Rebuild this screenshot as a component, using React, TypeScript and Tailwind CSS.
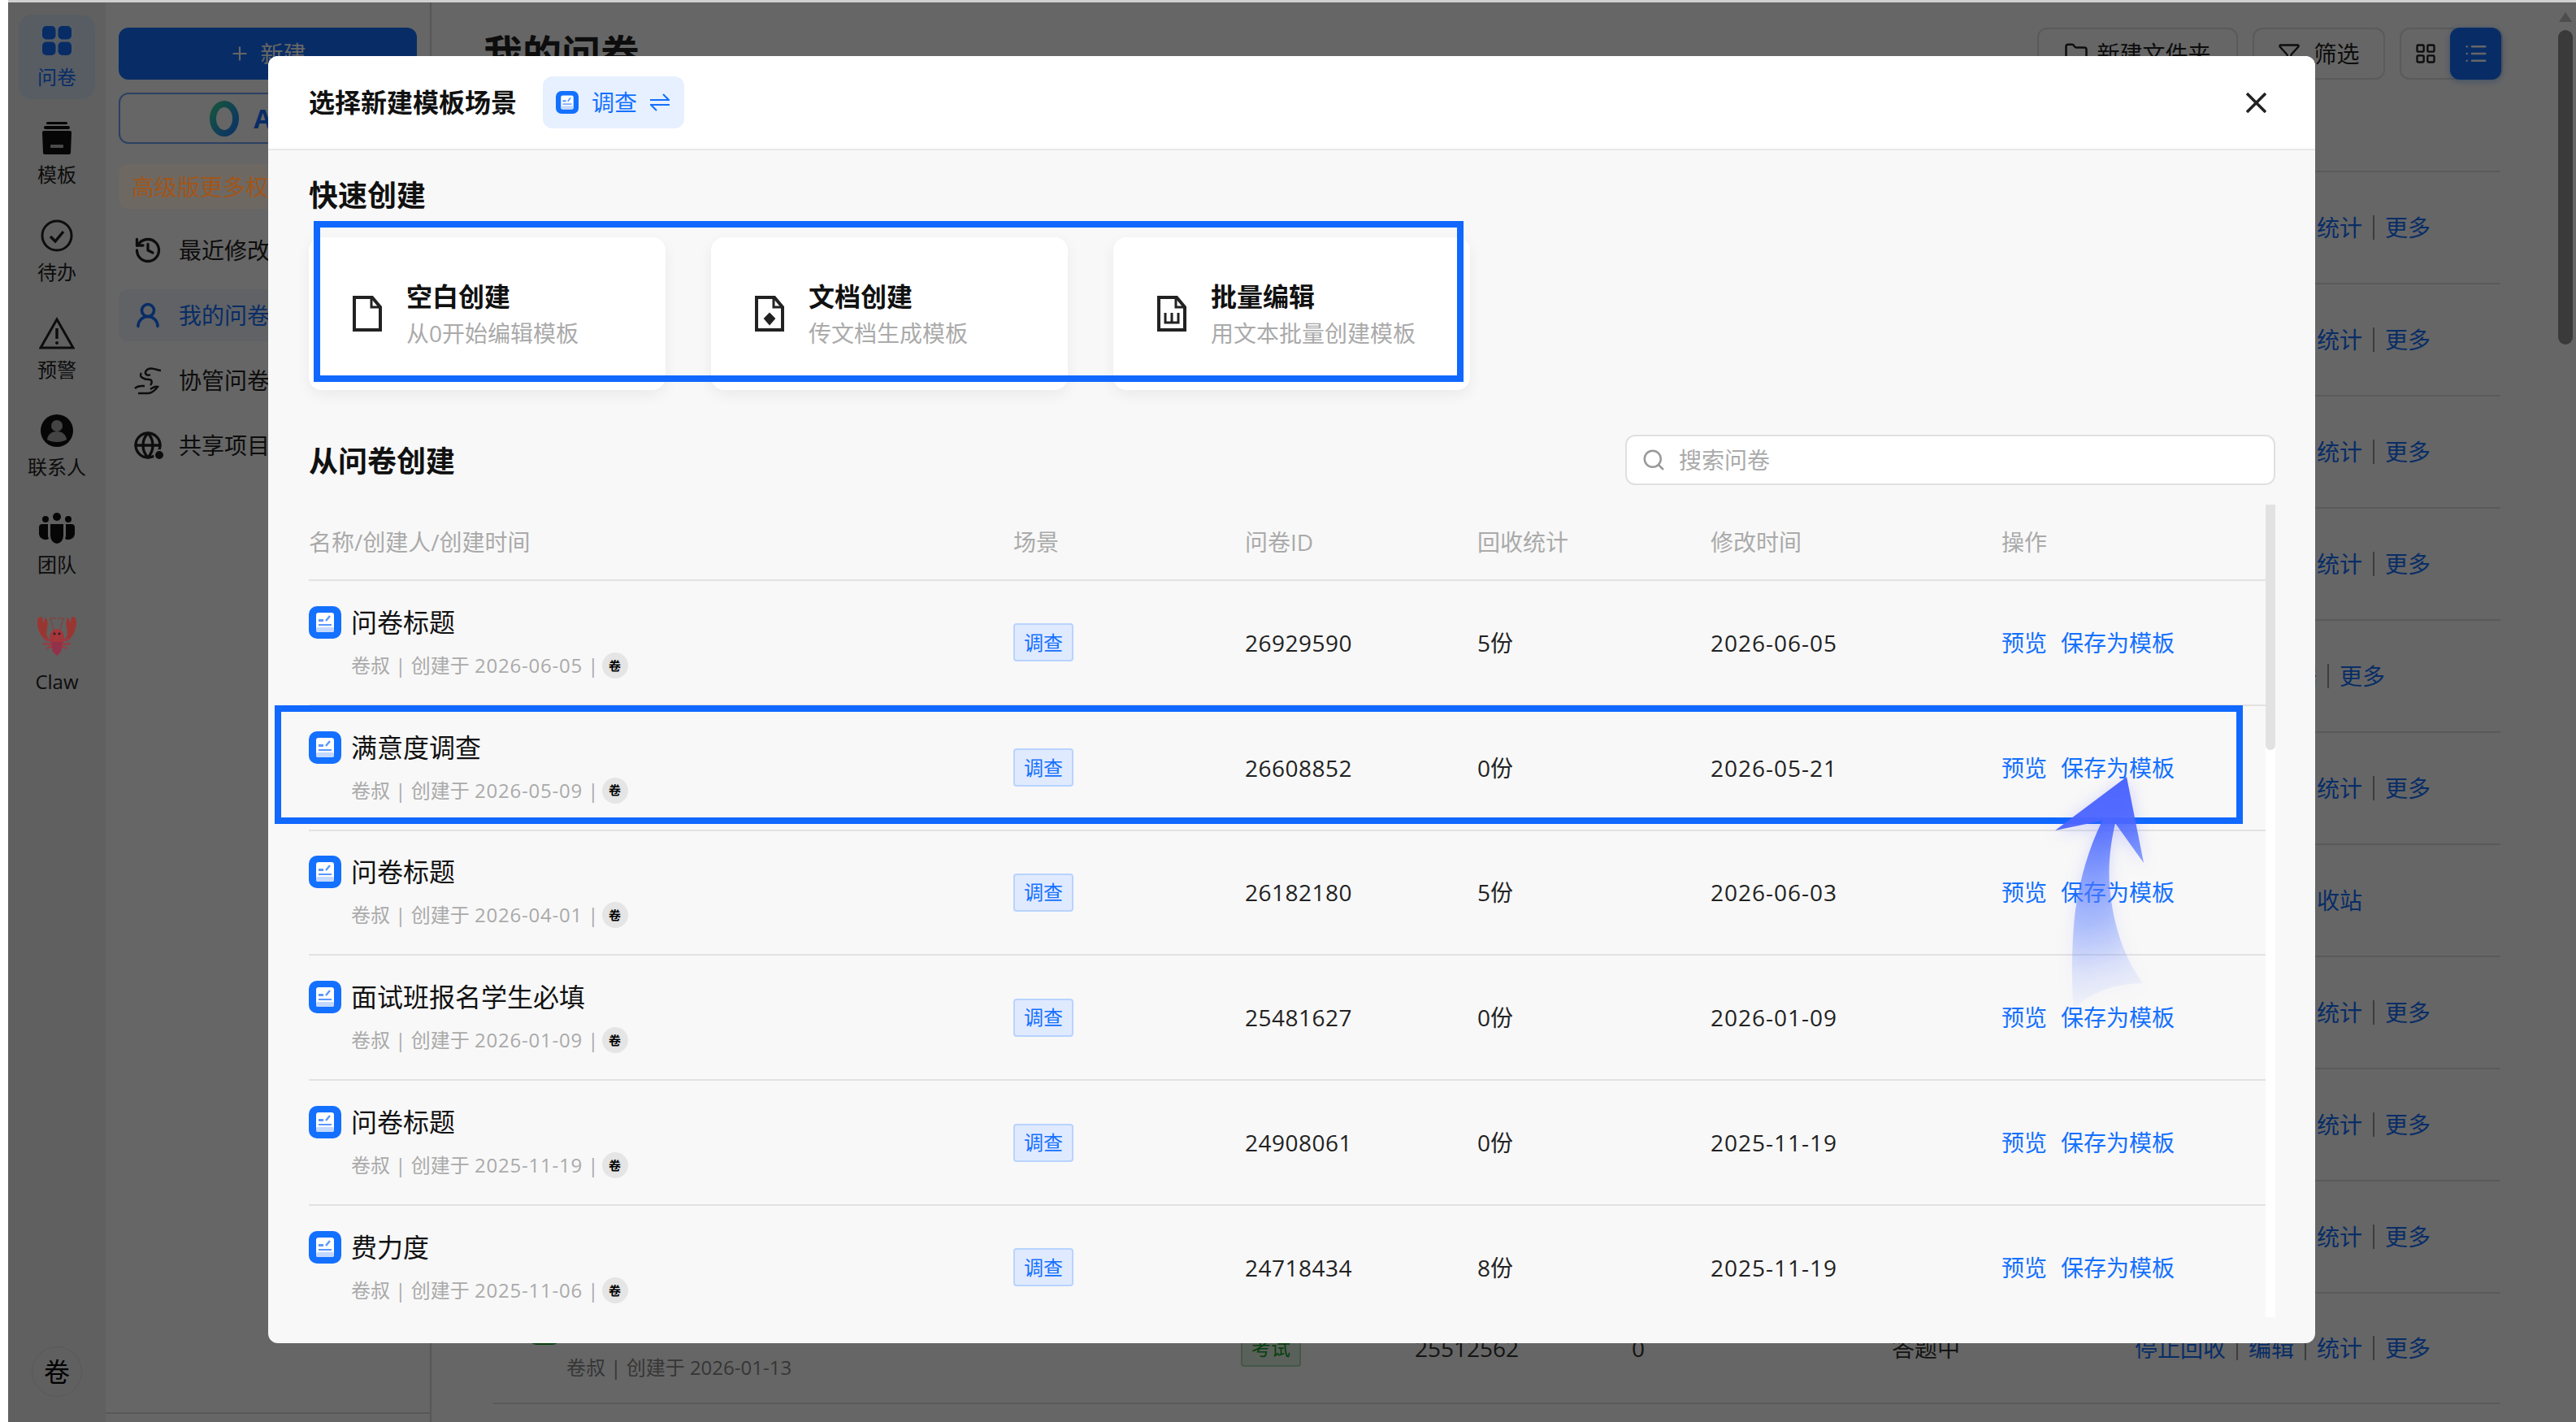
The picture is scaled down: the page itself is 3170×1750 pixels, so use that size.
import { Filter, Folder, Globe, History, LayoutGrid, List, Plus, Search, UserRound } from "lucide-react";

// 弹窗表格数据
const surveys = [
  { title: "问卷标题", created: "2026-06-05", id: "26929590", count: "5份", updated: "2026-06-05" },
  { title: "满意度调查", created: "2026-05-09", id: "26608852", count: "0份", updated: "2026-05-21" },
  { title: "问卷标题", created: "2026-04-01", id: "26182180", count: "5份", updated: "2026-06-03" },
  { title: "面试班报名学生必填", created: "2026-01-09", id: "25481627", count: "0份", updated: "2026-01-09" },
  { title: "问卷标题", created: "2025-11-19", id: "24908061", count: "0份", updated: "2025-11-19" },
  { title: "费力度", created: "2025-11-06", id: "24718434", count: "8份", updated: "2025-11-19" },
];

// 背景列表的操作列
const full = ["停止回收", "编辑", "统计", "更多"];
const pageRows = [full, full, full, full, ["查看全部回收数据", "更多"], full, ["停止回收", "移入回收站"], full, full, full, full];

function SurveyIcon({ size }: { size: number }) {
  return (
    <svg width={size} height={size} viewBox="0 0 40 40" className="shrink-0">
      <rect width="40" height="40" rx="10" fill="#1470ff" />
      <rect x="9" y="8" width="22" height="24" rx="3" fill="#ffffff" />
      <rect x="9" y="26" width="22" height="6" rx="2" fill="#c4d9ff" />
      <rect x="12" y="16" width="6" height="3" fill="#5a97ff" />
      <path d="M21 18l5-6" stroke="#5a97ff" strokeWidth="2.4" />
      <rect x="12" y="22" width="16" height="2" fill="#5a97ff" />
    </svg>
  );
}

function DocIcon({ kind }: { kind: "blank" | "doc" | "text" }) {
  return (
    <svg width="36" height="44" viewBox="0 0 36 44" fill="none" stroke="#222222" strokeWidth="4" className="shrink-0">
      <path d="M2 2h22l10 12v28H2z" />
      <path d="M23 2v12h11" strokeWidth="3" />
      {kind === "doc" && <path d="M18 22l6 6-6 7-6-7z" fill="#222222" strokeWidth="2" />}
      {kind === "text" && <path d="M10 21v12h16V21M18 21v12" strokeWidth="3" />}
    </svg>
  );
}

function Card({ title, desc, kind }: { title: string; desc: string; kind: "blank" | "doc" | "text" }) {
  return (
    <div className="flex h-[188px] w-[439px] items-center gap-[30px] rounded-[16px] bg-white pl-[54px] shadow-[0_6px_18px_rgba(0,0,0,0.06)]">
      <DocIcon kind={kind} />
      <div>
        <div className="text-[32px] leading-[44px] font-semibold text-[#111111]">{title}</div>
        <div className="mt-[3px] text-[28px] leading-[40px] text-[#aaaaaa]">{desc}</div>
      </div>
    </div>
  );
}

function RailItem({ label, active, children }: { label: string; active?: boolean; children: React.ReactNode }) {
  return (
    <div className={`flex h-[104px] w-[94px] flex-col items-center rounded-[16px] pt-[12px] ${active ? "bg-[#dce8fb]" : ""}`}>
      <div className="flex h-[40px] items-center justify-center">{children}</div>
      <div className={`mt-[9px] text-[24px] leading-[32px] whitespace-nowrap ${active ? "text-[#1470ff]" : "text-[#222222]"}`}>{label}</div>
    </div>
  );
}

function Rail() {
  return (
    <div className="flex h-full w-[120px] shrink-0 flex-col items-center gap-[16px] bg-[#f0f0f0] pt-[15px]">
      <RailItem label="问卷" active>
        <svg width="36" height="36" viewBox="0 0 36 36" fill="#1470ff">
          <rect width="16.5" height="16.5" rx="5" />
          <rect x="19.5" width="16.5" height="16.5" rx="5" />
          <rect y="19.5" width="16.5" height="16.5" rx="5" />
          <rect x="19.5" y="19.5" width="16.5" height="16.5" rx="5" />
        </svg>
      </RailItem>
      <RailItem label="模板">
        <svg width="40" height="40" viewBox="0 0 40 40" fill="#111111">
          <rect x="7" y="0" width="26" height="3" rx="1.5" />
          <rect x="4" y="5" width="32" height="4" rx="2" />
          <path d="M2 13a2 2 0 012-2h32a2 2 0 012 2l-1 25a2 2 0 01-2 2H5a2 2 0 01-2-2z" />
          <rect x="12" y="28" width="16" height="4" rx="1" fill="#bbbbbb" />
        </svg>
      </RailItem>
      <RailItem label="待办">
        <svg width="40" height="40" viewBox="0 0 40 40" fill="none" stroke="#222222">
          <circle cx="20" cy="20" r="18" strokeWidth="3" />
          <path d="M12 21l6 6 10-12" strokeWidth="3.5" />
        </svg>
      </RailItem>
      <RailItem label="预警">
        <svg width="44" height="40" viewBox="0 0 44 40" fill="none" stroke="#222222">
          <path d="M22 3L2 38h40z" strokeWidth="3" />
          <path d="M22 14v13" strokeWidth="3.5" />
          <circle cx="22" cy="32" r="2" fill="#222222" stroke="none" />
        </svg>
      </RailItem>
      <RailItem label="联系人">
        <svg width="40" height="40" viewBox="0 0 40 40">
          <circle cx="20" cy="20" r="20" fill="#111111" />
          <circle cx="20" cy="14" r="7" fill="#aaaaaa" />
          <path d="M8 31c1-7 6-10 12-10s11 3 12 10c-6 4-18 4-24 0z" fill="#aaaaaa" />
        </svg>
      </RailItem>
      <RailItem label="团队">
        <svg width="44" height="38" viewBox="0 0 44 38" fill="#111111">
          <circle cx="22" cy="5" r="5" />
          <circle cx="8" cy="8" r="4" />
          <circle cx="36" cy="8" r="4" />
          <path d="M14 14h16v14a8 10 0 01-16 0z" />
          <path d="M11 14H4a4 4 0 00-4 4v6a8 8 0 0012 8 12 12 0 01-1-5z" />
          <path d="M33 14h7a4 4 0 014 4v6a8 8 0 01-12 8 12 12 0 001-5z" />
        </svg>
      </RailItem>
      {/* 龙虾图标不受遮罩影响 */}
      <div className="relative z-[6] flex flex-col items-center pt-[21px]">
        <svg width="48" height="48" viewBox="0 0 48 48">
          <path d="M0 6C0 1 3 0 6 0l1 8 3-7c3 2 3 9 2 13-1 6-2 10 3 14l-3 2C6 27 0 18 0 6z" fill="#9a3632" />
          <path d="M48 6c0-5-3-6-6-6l-1 8-3-7c-3 2-3 9-2 13 1 6 2 10-3 14l3 2c6-3 12-12 12-24z" fill="#9a3632" />
          <path d="M20 16C18 8 17 3 15 2h8M28 16c2-8 3-13 5-14h-8" fill="none" stroke="#7d4644" strokeWidth="1.4" />
          <ellipse cx="24" cy="25" rx="9" ry="10" fill="#a5363a" />
          <path d="M16 31h16l-3 12-5 5-5-5z" fill="#93304a" />
          <path d="M8 27l10 3M7 33l11 1M11 39l8-3M40 27l-10 3M41 33l-11 1M37 39l-8-3" stroke="#9b3a42" strokeWidth="2.4" />
          <circle cx="21" cy="21" r="1.4" fill="#222222" />
          <circle cx="27" cy="21" r="1.4" fill="#222222" />
        </svg>
      </div>
      <div className="text-[24px] leading-[32px] text-[#222222]">Claw</div>
      <div className="mt-auto mb-[31px] flex h-[62px] w-[62px] items-center justify-center rounded-full border border-[#dddddd] text-[32px] text-black">卷</div>
    </div>
  );
}

function MenuItem({ label, active, icon }: { label: string; active?: boolean; icon: React.ReactNode }) {
  return (
    <div className={`flex h-[64px] items-center gap-[20px] rounded-[12px] pl-[18px] ${active ? "bg-[#f0f4fc] text-[#1470ff]" : "text-[#222222]"}`}>
      <div className="flex w-[36px] justify-center">{icon}</div>
      <span className="text-[28px]">{label}</span>
    </div>
  );
}

function SubNav() {
  return (
    <div className="flex h-full w-[401px] shrink-0 flex-col border-r-2 border-[#d8d8d8] bg-white">
      <div className="flex flex-col px-[16px] pt-[31px]">
        <div className="flex h-[64px] w-[367px] items-center justify-center gap-[12px] rounded-[12px] bg-[#1470ff] text-[28px] text-white">
          <Plus size={26} />
          新建
        </div>
        <div className="mt-[16px] flex h-[63px] w-[367px] items-center justify-center gap-[18px] rounded-[12px] border-2 border-[#6ea3f5] pl-[8px] text-[32px] font-bold text-[#1470ff]">
          <svg width="36" height="48" viewBox="0 0 36 48" fill="none">
            <defs>
              <linearGradient id="aiRing" x1="0" y1="0" x2="1" y2="1">
                <stop offset="0" stopColor="#36d29a" />
                <stop offset="1" stopColor="#1f7fff" />
              </linearGradient>
            </defs>
            <ellipse cx="18" cy="24" rx="14" ry="18" stroke="url(#aiRing)" strokeWidth="8" />
          </svg>
          <span>AI创建</span>
        </div>
        <div className="relative z-[6] mt-[25px] flex h-[55px] w-[367px] items-center rounded-[12px] bg-[#6e6862] pl-[16px] text-[28px] text-[#a0561a]">高级版更多权益</div>
        <div className="mt-[19px] flex flex-col gap-[16px]">
          <MenuItem label="最近修改" icon={<History size={36} strokeWidth={2.2} />} />
          <MenuItem label="我的问卷" active icon={<UserRound size={36} strokeWidth={2.4} />} />
          <MenuItem
            label="协管问卷"
            icon={
              <svg width="36" height="36" viewBox="0 0 36 36" fill="none" stroke="#222222" strokeWidth="2.5">
                <path d="M34 6c-6-1-14-5-18 0-3 4 1 7 5 5M10 9c-4 5 4 8 9 8 4 0 5 4 2 7" />
                <path d="M2 28c4-4 8-3 12-3M6 34h12c5 0 9-4 12-8-3-1-6 1-9 3" />
              </svg>
            }
          />
          <MenuItem
            label="共享项目"
            icon={
              <div className="relative">
                <Globe size={36} strokeWidth={2.2} />
                <span className="absolute -right-[3px] -bottom-[1px] h-[14px] w-[14px] rounded-full border-2 border-white bg-[#222222]" />
              </div>
            }
          />
        </div>
      </div>
      <div className="mt-auto mb-[10px] border-t-2 border-[#dcdcdc]" />
    </div>
  );
}

function PageRow({ actions, last }: { actions: string[]; last: boolean }) {
  return (
    <div className={`grid h-[138px] grid-cols-[90px_830px_214px_267px_320px_299px_1fr] items-center border-t-2 border-[#e0e0e0] text-[28px] ${last ? "border-b-2" : ""}`}>
      <div className="self-start pt-[23px] pl-[43px]">{last && <div className="h-[40px] w-[40px] rounded-[10px] bg-[#16a02a]" />}</div>
      <div className="self-end pb-[25px] text-[24px] text-[#888888]">{last && "卷叔 | 创建于 2026-01-13"}</div>
      <div>{last && <span className="flex h-[46px] w-[74px] items-center justify-center rounded-[4px] border-2 border-[#a8dcae] bg-[#def3e0] text-[24px] text-[#16a02a]">考试</span>}</div>
      <div className="text-[#333333]">{last && "25512562"}</div>
      <div className="text-[#333333]">{last && "0"}</div>
      <div className="text-[#333333]">{last && "答题中"}</div>
      <div className="flex items-center whitespace-nowrap text-[#1470ff]">
        {actions.map((a, i) => (
          <span key={a} className="flex items-center">
            {i > 0 && <span className="mx-[13px] h-[30px] w-[2px] bg-[#999999]" />}
            {a}
          </span>
        ))}
      </div>
    </div>
  );
}

function Page() {
  return (
    <div className="flex h-full flex-1 flex-col">
      <div className="flex items-start pt-[31px] pr-[90px] pl-[64px]">
        <h1 className="text-[48px] leading-[64px] font-bold text-[#222222]">我的问卷</h1>
        <div className="ml-auto flex h-[64px] gap-[18px] text-[28px] text-[#222222]">
          <div className="flex w-[247px] items-center justify-center gap-[10px] rounded-[12px] border-2 border-[#e0e0e0]">
            <Folder size={30} />
            新建文件夹
          </div>
          <div className="flex w-[163px] items-center justify-center gap-[16px] rounded-[12px] border-2 border-[#e0e0e0]">
            <Filter size={28} />
            筛选
          </div>
          <div className="flex w-[127px] items-center rounded-[12px] border-2 border-[#e0e0e0]">
            <div className="flex flex-1 justify-center">
              <LayoutGrid size={28} />
            </div>
            <div className="flex h-[64px] w-[63px] items-center justify-center rounded-[12px] bg-[#1470ff] text-white shadow-[0_2px_8px_rgba(20,112,255,0.4)]">
              <List size={30} />
            </div>
          </div>
        </div>
      </div>
      <div className="mt-[112px] mr-[93px] ml-[76px]">
        {pageRows.map((actions, i) => (
          <PageRow key={i} actions={actions} last={i === pageRows.length - 1} />
        ))}
      </div>
    </div>
  );
}

function SurveyRow({ s }: { s: (typeof surveys)[number] }) {
  return (
    <div className="grid h-[153.8px] grid-cols-[867px_285px_286px_287px_358px_1fr] items-center border-b-2 border-[#e2e2e2] text-[28px] text-[#222222]">
      <div>
        <div className="flex items-center gap-[12px]">
          <SurveyIcon size={40} />
          <span className="text-[32px] leading-[40px] text-[#111111]">{s.title}</span>
        </div>
        <div className="mt-[16px] flex h-[34px] items-center pl-[52px] text-[24px] text-[#aaaaaa]">
          <span className="whitespace-pre">
            卷叔 | 创建于 <span className="tracking-[0.8px]">{s.created}</span> |
          </span>
          <span className="ml-[4px] flex h-[32px] w-[32px] items-center justify-center rounded-full bg-[#e5e5e5] text-[15px] font-bold text-black">卷</span>
        </div>
      </div>
      <div>
        <span className="flex h-[47px] w-[74px] items-center justify-center rounded-[4px] border-2 border-[#b8d3ff] bg-[#e0eaff] text-[24px] text-[#1470ff]">调查</span>
      </div>
      <div className="tracking-[0.5px]">{s.id}</div>
      <div>{s.count}</div>
      <div className="tracking-[1px]">{s.updated}</div>
      <div className="flex gap-[17px] text-[#1470ff]">
        <span>预览</span>
        <span>保存为模板</span>
      </div>
    </div>
  );
}

function Modal() {
  return (
    <div className="absolute top-[66px] left-[320px] z-10 h-[1584px] w-[2519px] overflow-hidden rounded-[12px] bg-[#f8f8f8]">
      <div className="flex h-[116px] items-center border-b-2 border-[#e8e8e8] bg-white pr-[60px] pl-[50px]">
        <div className="text-[32px] font-semibold text-[#111111]">选择新建模板场景</div>
        <div className="ml-[32px] flex h-[64px] items-center gap-[16px] rounded-[12px] bg-[#e6f0ff] pr-[18px] pl-[16px] text-[28px] text-[#1470ff]">
          <SurveyIcon size={28} />
          <span>调查</span>
          <svg width="24" height="22" viewBox="0 0 24 22" fill="none" stroke="#1470ff" strokeWidth="2">
            <path d="M0 8h23L16 1M24 14H1l7 7" />
          </svg>
        </div>
        <svg width="25" height="25" viewBox="0 0 25 25" stroke="#222222" strokeWidth="3.6" className="ml-auto">
          <path d="M1 1l23 23M24 1L1 24" />
        </svg>
      </div>
      <div className="pt-[31px] pl-[50px]">
        <h2 className="text-[36px] leading-[50px] font-bold text-[#111111]">快速创建</h2>
        <div className="mt-[26px] flex gap-[56px]">
          <Card kind="blank" title="空白创建" desc="从0开始编辑模板" />
          <Card kind="doc" title="文档创建" desc="传文档生成模板" />
          <Card kind="text" title="批量编辑" desc="用文本批量创建模板" />
        </div>
        <div className="mt-[55px] flex w-[2420px] items-center justify-between">
          <h2 className="pt-[4px] text-[36px] leading-[50px] font-bold text-[#111111]">从问卷创建</h2>
          <div className="flex h-[62px] w-[800px] items-center gap-[16px] rounded-[12px] border-2 border-[#e0e0e0] bg-white pl-[18px] text-[28px] text-[#aaaaaa]">
            <Search size={30} className="text-[#999999]" />
            搜索问卷
          </div>
        </div>
        <div className="relative mt-[24px] h-[1000px] w-[2420px] overflow-hidden">
          <div className="w-[2408px]">
            <div className="grid h-[94px] grid-cols-[867px_285px_286px_287px_358px_1fr] items-center border-b-2 border-[#e2e2e2] text-[28px] text-[#aaaaaa]">
              <div>名称/创建人/创建时间</div>
              <div>场景</div>
              <div>问卷ID</div>
              <div>回收统计</div>
              <div>修改时间</div>
              <div>操作</div>
            </div>
            {surveys.map((s) => (
              <SurveyRow key={s.id} s={s} />
            ))}
          </div>
          {/* 滚动条 */}
          <div className="absolute top-0 right-0 h-full w-[12px] bg-white">
            <div className="h-[302px] w-full rounded-b-[6px] bg-[#e2e2e2]" />
          </div>
        </div>
      </div>
      {/* 标注框 */}
      <div className="absolute top-[203px] left-[56px] h-[198px] w-[1415px] border-8 border-[#1068ff]" />
      <div className="absolute top-[799px] left-[8px] h-[146px] w-[2422px] border-8 border-[#1068ff]" />
    </div>
  );
}

function Arrow() {
  return (
    <svg width="170" height="320" viewBox="0 0 170 320" className="absolute top-[937px] left-[2490px] z-20 drop-shadow-[0_4px_10px_rgba(80,90,255,0.28)]">
      <defs>
        <linearGradient id="arrowFill" gradientUnits="userSpaceOnUse" x1="60" y1="30" x2="120" y2="300">
          <stop offset="0" stopColor="#4d66ff" stopOpacity="1" />
          <stop offset="0.16" stopColor="#4d66ff" stopOpacity="0.95" />
          <stop offset="0.39" stopColor="#4d72ff" stopOpacity="0.62" />
          <stop offset="0.61" stopColor="#5a82ff" stopOpacity="0.4" />
          <stop offset="0.8" stopColor="#6a8eff" stopOpacity="0.16" />
          <stop offset="1" stopColor="#7a9aff" stopOpacity="0" />
        </linearGradient>
      </defs>
      <path
        d="M117 16L29 82l58-12C70 105 60 140 54 180c-5 40-5 90-2 125 10-20 50-35 85-35-22-30-37-70-41-120-2-30 2-55 7-77l35 49z"
        fill="url(#arrowFill)"
      />
    </svg>
  );
}

export default function App() {
  return (
    <div className="flex h-[1750px] w-[3170px] overflow-hidden bg-white pl-[10px] font-['Open_Sans','Noto_Sans_CJK_SC',sans-serif]">
      <div className="relative flex h-full flex-1 border-t-[3px] border-[#d0d0d0]">
        <Rail />
        <SubNav />
        <Page />
        {/* 页面滚动条 */}
        <div className="absolute top-0 right-0 h-full w-[26px]">
          <div className="mx-auto mt-[12px] h-0 w-0 border-x-[8px] border-b-[12px] border-x-transparent border-b-[#c0c0c0]" />
          <div className="mx-auto mt-[10px] h-[387px] w-[18px] rounded-[9px] bg-[#919191]" />
        </div>
        <div className="absolute inset-0 z-[5] bg-black/60" />
        <Modal />
        <Arrow />
      </div>
    </div>
  );
}
